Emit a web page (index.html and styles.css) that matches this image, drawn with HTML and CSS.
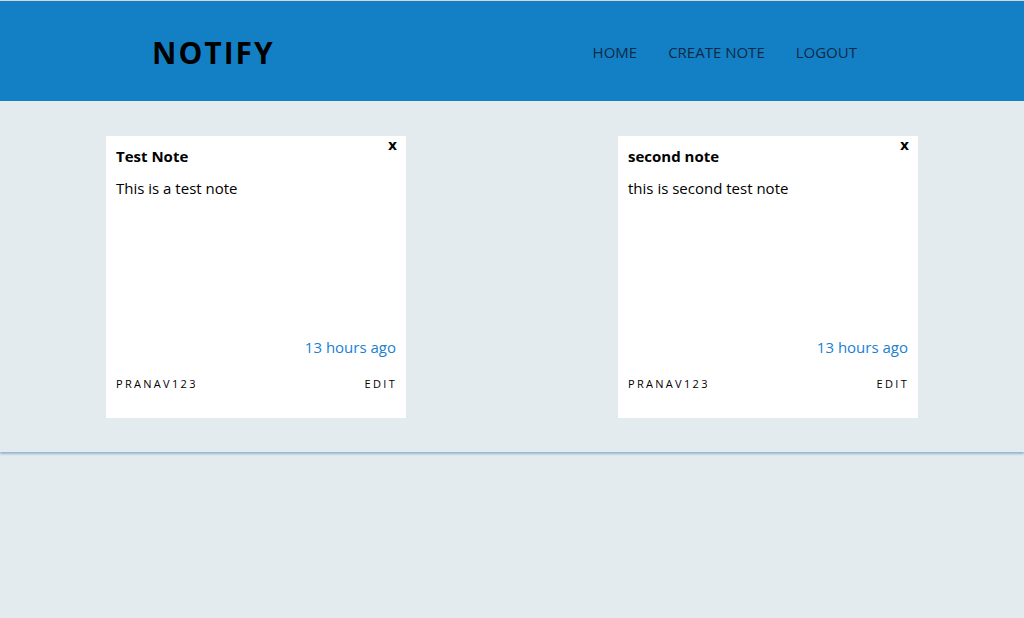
FILE: index.html
```html
<!DOCTYPE html>
<html>
<head>
<meta charset="utf-8">
<link rel="stylesheet" href="styles.css">
</head>
<body>
<header class="header">
  <div class="logo">NOTIFY</div>
  <nav class="nav">
    <a class="nav-link">HOME</a>
    <a class="nav-link">CREATE NOTE</a>
    <a class="nav-link">LOGOUT</a>
  </nav>
</header>
<section class="notes">
  <div class="slot">
    <div class="card">
      <span class="close">x</span>
      <h3 class="title">Test Note</h3>
      <p class="body">This is a test note</p>
      <div class="time">13 hours ago</div>
      <div class="foot"><span>PRANAV123</span><span>EDIT</span></div>
    </div>
  </div>
  <div class="slot">
    <div class="card">
      <span class="close">x</span>
      <h3 class="title">second note</h3>
      <p class="body">this is second test note</p>
      <div class="time">13 hours ago</div>
      <div class="foot"><span>PRANAV123</span><span>EDIT</span></div>
    </div>
  </div>
</section>
</body>
</html>
```

FILE: styles.css
```css
html, body {
  margin: 0;
  padding: 0;
}
body {
  background: #e3ebef;
  font-family: "Open Sans", "Noto Sans", sans-serif;
  border-top: 1px solid #d0d6da;
  height: 617px;
}
.header {
  background: #1380c6;
  height: 100px;
  display: flex;
  align-items: center;
  padding: 0 167px 0 152px;
}
.logo {
  font-size: 30px;
  font-weight: 700;
  letter-spacing: 2px;
  color: #000;
  flex: 1;
  margin-top: 3px;
}
.nav {
  display: flex;
  gap: 31px;
  margin-top: 2px;
}
.nav-link {
  font-size: 15px;
  color: #0d2a45;
  cursor: pointer;
}
.notes {
  display: grid;
  grid-template-columns: 1fr 1fr;
  padding: 35px 0 34px;
  box-shadow: 0 2px 2px rgba(70, 130, 190, 0.5);
}
.slot {
  display: flex;
  justify-content: center;
}
.card {
  position: relative;
  width: 280px;
  height: 262px;
  background: #fff;
  padding: 10px;
  display: flex;
  flex-direction: column;
  color: #000;
}
.close {
  position: absolute;
  top: 1px;
  right: 9px;
  font-weight: 700;
  font-size: 14px;
  font-family: "DejaVu Sans", sans-serif;
}
.title {
  margin: 0;
  font-size: 15px;
  font-weight: 700;
  line-height: 20px;
}
.body {
  margin: 10px 0 0;
  font-size: 15px;
  line-height: 24px;
  flex: 1;
}
.time {
  text-align: right;
  color: #1a7fd0;
  font-size: 15px;
  line-height: 24px;
}
.foot {
  display: flex;
  justify-content: space-between;
  font-size: 11px;
  letter-spacing: 2.3px;
  margin: 18px -1px 17px 0;
  line-height: 14px;
}
```
